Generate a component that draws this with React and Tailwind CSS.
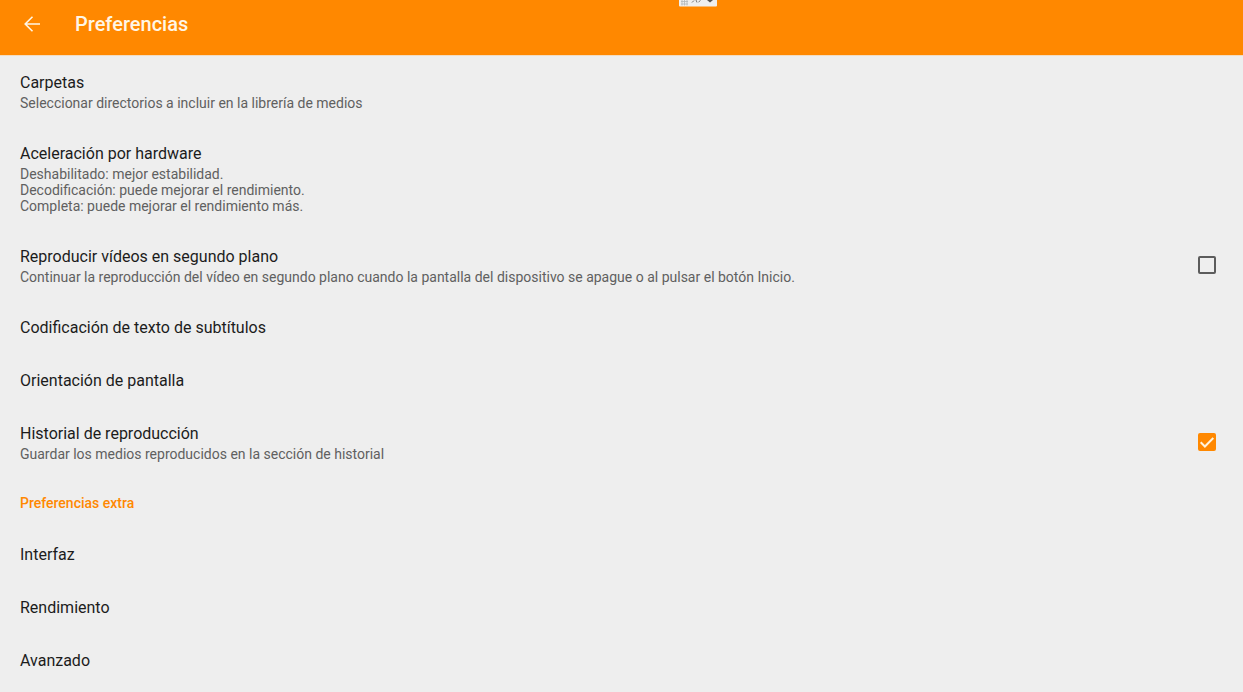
import { useId, useState } from "react";

function ItemText({ title, summary }) {
  return (
    <span className="flex flex-col gap-[2px]">
      <span className="text-[16px] leading-[21px] text-[#1c1c1c]">{title}</span>
      {summary && (
        <span className="whitespace-pre-line text-[14px] leading-[16px] text-[#606060]">{summary}</span>
      )}
    </span>
  );
}

function LinkItem({ title, summary }) {
  return (
    <li>
      <button type="button" className="block w-full px-5 py-4 text-left">
        <ItemText title={title} summary={summary} />
      </button>
    </li>
  );
}

function CheckItem({ title, summary, initial }) {
  const id = useId();
  const [checked, setChecked] = useState(initial);
  return (
    <li className="flex items-center justify-between gap-6 pl-5 pr-[27px]">
      <label htmlFor={id} className="grow py-4">
        <ItemText title={title} summary={summary} />
      </label>
      <span className="grid shrink-0 pb-[2px]">
        <input
          id={id}
          type="checkbox"
          checked={checked}
          onChange={(e) => setChecked(e.target.checked)}
          className="peer col-start-1 row-start-1 size-[18px] appearance-none rounded-xs border-2 border-[#5c5c5c] checked:border-[#ff8800] checked:bg-[#ff8800]"
        />
        <svg
          viewBox="0 0 18 18"
          aria-hidden="true"
          className="pointer-events-none invisible col-start-1 row-start-1 size-[18px] fill-none stroke-[#fff3dc] stroke-2 peer-checked:visible"
        >
          <path d="M2.7 9.3 6.9 13.5 15.3 5" />
        </svg>
      </span>
    </li>
  );
}

export default function App() {
  return (
    <div className="min-h-screen bg-[#eeeeee] font-[Roboto,sans-serif]">
      <header className="relative flex h-14 items-center gap-[31px] border-b border-[#f3dcc0] bg-[#ff8800] px-5 pb-[7px]">
        <button type="button" aria-label="Atrás" className="size-6">
          <svg viewBox="0 0 24 24" className="size-6 fill-none stroke-[#fff6e6]" strokeWidth="1.6" aria-hidden="true">
            <path d="M20 12H5.500M12.500 4.700 5.200 12l7.300 7.300" />
          </svg>
        </button>
        <h1 className="text-[20px] leading-6 font-medium text-[#fff6e6]">Preferencias</h1>
        <svg viewBox="0 0 38 7" className="absolute top-0 left-[679px] h-[7px] w-[38px]" aria-hidden="true">
          <path d="M0 0h38v5.500a1 1 0 0 1-1 1H1a1 1 0 0 1-1-1z" fill="#efefef" />
          <path d="M2 1.500h7M2 4h7M3 0v5.500M5.500 0v5.500M8 0v5.500" stroke="#b3b8ba" strokeWidth=".8" />
          <path d="M13 2.500l2-2M17 0l1 2.500M19.500 2l2-1.500" stroke="#777" fill="none" />
          <path d="M28 0h6l-3 2.500z" fill="#555" />
        </svg>
      </header>
      <main>
        <ul>
          <LinkItem title="Carpetas" summary="Seleccionar directorios a incluir en la librería de medios" />
          <LinkItem
            title="Aceleración por hardware"
            summary={"Deshabilitado: mejor estabilidad.\nDecodificación: puede mejorar el rendimiento.\nCompleta: puede mejorar el rendimiento más."}
          />
          <CheckItem
            title="Reproducir vídeos en segundo plano"
            summary="Continuar la reproducción del vídeo en segundo plano cuando la pantalla del dispositivo se apague o al pulsar el botón Inicio."
            initial={false}
          />
          <LinkItem title="Codificación de texto de subtítulos" />
          <LinkItem title="Orientación de pantalla" />
          <CheckItem
            title="Historial de reproducción"
            summary="Guardar los medios reproducidos en la sección de historial"
            initial={true}
          />
        </ul>
        <h2 className="px-5 py-4 text-[14px] leading-[18px] font-medium text-[#ff8800]">Preferencias extra</h2>
        <ul>
          <LinkItem title="Interfaz" />
          <LinkItem title="Rendimiento" />
          <LinkItem title="Avanzado" />
        </ul>
      </main>
    </div>
  );
}
